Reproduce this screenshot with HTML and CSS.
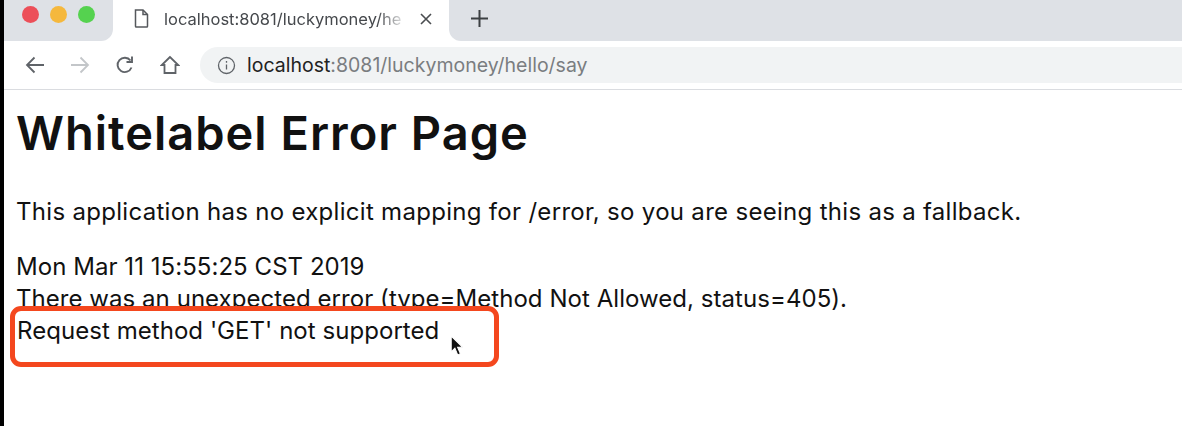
FILE: index.html
```html
<!DOCTYPE html>
<html lang="en">
  <head>
    <meta charset="UTF-8" />
    <meta name="viewport" content="width=device-width, initial-scale=1.0" />
    <title>Whitelabel Error Page</title>
    <link rel="stylesheet" href="styles.css">
  </head>
  <body>
    <div class="tabstrip">
      <div class="traffic">
        <span class="dot dot-red"></span>
        <span class="dot dot-yellow"></span>
        <span class="dot dot-green"></span>
      </div>
      <div class="tab">
        <svg class="tab-icon" width="15" height="19" viewBox="0 0 15 19" fill="none" stroke="#55585c" stroke-width="1.500">
          <path d="M1.500 1h7.500l4.500 4.500v11.700a.8.8 0 0 1-.8.8H2.300a.8.8 0 0 1-.8-.8z" />
          <path d="M9 1v4.500h4.500" />
        </svg>
        <span class="tab-title">localhost:8081/luckymoney/he</span>
        <svg class="tab-close" width="12" height="12" viewBox="0 0 12 12" stroke="#4a4d50" stroke-width="1.600">
          <path d="M1 1l10 10M11 1L1 11" />
        </svg>
      </div>
      <div class="tab-rest">
        <svg class="new-tab" width="17" height="17" viewBox="0 0 17 17" stroke="#3c4043" stroke-width="2">
          <path d="M8.500 0v17M0 8.500h17" />
        </svg>
      </div>
    </div>

    <div class="toolbar">
      <svg class="nav-icon" width="20" height="18" viewBox="0 0 20 18" fill="none" stroke="#5f6368" stroke-width="1.800">
        <path d="M19 9H2M9.500 1.500L2 9l7.500 7.500" />
      </svg>
      <svg class="nav-icon" width="20" height="18" viewBox="0 0 20 18" fill="none" stroke="#c3c6c9" stroke-width="1.800">
        <path d="M1 9h17M10.500 1.500L18 9l-7.500 7.500" />
      </svg>
      <svg class="nav-icon" width="20" height="20" viewBox="0 0 20 20" fill="none" stroke="#5f6368" stroke-width="1.900">
        <path d="M16.500 12.500a7.200 7.200 0 1 1-1-7" />
        <path d="M17 1.500V7h-5.500" />
      </svg>
      <svg class="nav-icon" width="20" height="20" viewBox="0 0 20 20" fill="none" stroke="#5f6368" stroke-width="1.800">
        <path d="M10 2L1.800 10H4.500v8h11v-8h2.700z" />
      </svg>
      <div class="omnibox">
        <svg width="19" height="19" viewBox="0 0 19 19" fill="none" stroke="#5f6368" stroke-width="1.300">
          <circle cx="9.500" cy="9.500" r="8" />
          <path d="M9.500 8.500v5M9.500 5v1.700" />
        </svg>
        <span class="url"><span class="url-host">localhost</span>:8081/luckymoney/hello/say</span>
      </div>
    </div>

    <div class="page">
      <h1>Whitelabel Error Page</h1>
      <p class="intro">This application has no explicit mapping for /error, so you are seeing this as a fallback.</p>
      <div class="line">Mon Mar 11 15:55:25 CST 2019</div>
      <div class="line">There was an unexpected error (type=Method Not Allowed, status=405).</div>
      <div class="highlight">
        Request method 'GET' not supported
        <svg class="cursor" width="15" height="22" viewBox="0 0 14 21">
          <path d="M1 1v15l3.500-3.400 2.700 6.400 2.600-1.100-2.700-6.200H12z" fill="#111" stroke="#fff" stroke-width="1" />
        </svg>
      </div>
    </div>
  </body>
</html>
```

FILE: styles.css
```css
/* Page */
body {
  margin: 0;
  height: 426px;
  overflow: hidden;
  background-color: white;
  border-left: 4px solid #000;
  font-family: Inter, "Liberation Sans", sans-serif;
  color: #111;
}

/* Tab strip */
.tabstrip {
  display: flex;
  height: 41px;
}

.traffic {
  display: flex;
  gap: 11px;
  width: 109px;
  height: 41px;
  padding: 6px 0 0 18px;
  box-sizing: border-box;
  background-color: #dee1e6;
  border-radius: 0 0 12px 0;
}

.dot {
  width: 17px;
  height: 17px;
  border-radius: 50%;
}

.dot-red {
  background-color: #ec4f59;
}

.dot-yellow {
  background-color: #f5b83d;
}

.dot-green {
  background-color: #55d24f;
}

.tab {
  display: flex;
  align-items: center;
  width: 336px;
  box-sizing: border-box;
  padding: 0 0 4px 21px;
}

.tab-title {
  margin-left: 15px;
  width: 243px;
  font-size: 16.500px;
  color: #45484c;
  white-space: nowrap;
  mask-image: linear-gradient(to right, black 88%, transparent);
}

.tab-close {
  margin-left: 13px;
}

.tab-rest {
  flex: 1;
  display: flex;
  align-items: center;
  padding: 0 0 4px 22px;
  background-color: #dee1e6;
  border-radius: 0 0 0 12px;
}

/* Toolbar */
.toolbar {
  display: flex;
  align-items: center;
  height: 48px;
  padding-left: 21px;
  background-color: white;
  border-bottom: 1px solid #dadce0;
  gap: 25px;
}

.omnibox {
  flex: 1;
  display: flex;
  align-items: center;
  gap: 11px;
  height: 36px;
  margin-left: -5px;
  padding-left: 17px;
  background-color: #f1f3f4;
  border-radius: 18px 0 0 18px;
}

.url {
  font-size: 19.500px;
  color: #7a7d80;
}

.url-host {
  color: #222;
}

/* Error content */
.page {
  padding: 0 12px;
  font-size: 24px;
  line-height: 32px;
  letter-spacing: 0.05px;
}

h1 {
  margin: 14px 0 34px;
  font-size: 47px;
  font-weight: 600;
  line-height: 58px;
  letter-spacing: 1px;
}

.intro {
  margin: 0 0 23px;
  letter-spacing: 0.3px;
}

.highlight {
  position: relative;
  width: 489px;
  height: 61px;
  box-sizing: border-box;
  margin: -9px 0 0 -6px;
  padding: 4px 0 0 2px;
  background-color: white;
  border: 5px solid #f4471e;
  border-radius: 11px;
}

.cursor {
  position: absolute;
  left: 435px;
  top: 24px;
}
```
